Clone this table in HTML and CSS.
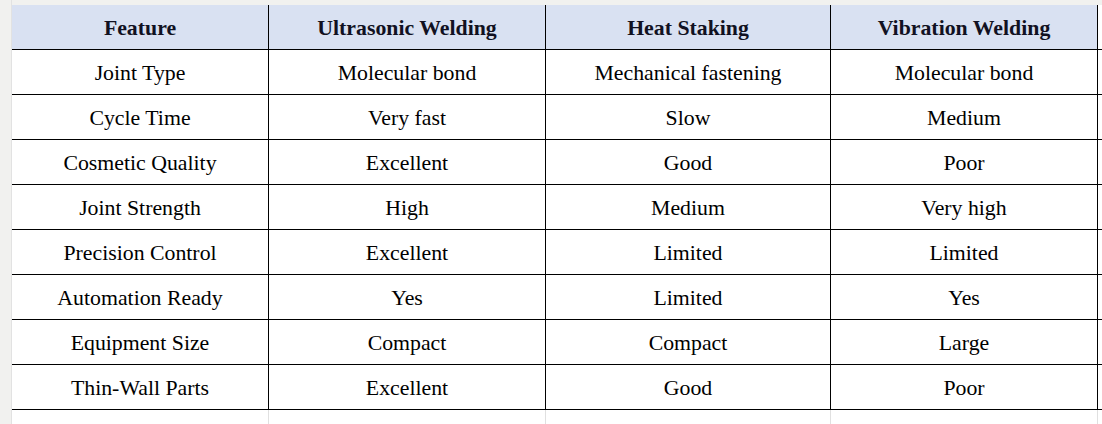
FILE: index.html
```html
<!DOCTYPE html>
<html>
<head>
<meta charset="utf-8">
<link rel="stylesheet" href="styles.css">
</head>
<body>
<div class="sheet">
  <div class="gutter"></div>
  <div class="area">
    <div class="topband"></div>
    <div class="table">
      <div class="row head">
        <div class="cell c1">Feature</div>
        <div class="cell c2">Ultrasonic Welding</div>
        <div class="cell c3">Heat Staking</div>
        <div class="cell c4">Vibration Welding</div>
      </div>
      <div class="row">
        <div class="cell c1">Joint Type</div>
        <div class="cell c2">Molecular bond</div>
        <div class="cell c3">Mechanical fastening</div>
        <div class="cell c4">Molecular bond</div>
      </div>
      <div class="row">
        <div class="cell c1">Cycle Time</div>
        <div class="cell c2">Very fast</div>
        <div class="cell c3">Slow</div>
        <div class="cell c4">Medium</div>
      </div>
      <div class="row">
        <div class="cell c1">Cosmetic Quality</div>
        <div class="cell c2">Excellent</div>
        <div class="cell c3">Good</div>
        <div class="cell c4">Poor</div>
      </div>
      <div class="row">
        <div class="cell c1">Joint Strength</div>
        <div class="cell c2">High</div>
        <div class="cell c3">Medium</div>
        <div class="cell c4">Very high</div>
      </div>
      <div class="row">
        <div class="cell c1">Precision Control</div>
        <div class="cell c2">Excellent</div>
        <div class="cell c3">Limited</div>
        <div class="cell c4">Limited</div>
      </div>
      <div class="row">
        <div class="cell c1">Automation Ready</div>
        <div class="cell c2">Yes</div>
        <div class="cell c3">Limited</div>
        <div class="cell c4">Yes</div>
      </div>
      <div class="row">
        <div class="cell c1">Equipment Size</div>
        <div class="cell c2">Compact</div>
        <div class="cell c3">Compact</div>
        <div class="cell c4">Large</div>
      </div>
      <div class="row">
        <div class="cell c1">Thin-Wall Parts</div>
        <div class="cell c2">Excellent</div>
        <div class="cell c3">Good</div>
        <div class="cell c4">Poor</div>
      </div>
      <div class="row empty">
        <div class="cell c1"></div>
        <div class="cell c2"></div>
        <div class="cell c3"></div>
        <div class="cell c4"></div>
      </div>
    </div>
  </div>
</div>
</body>
</html>
```
FILE: styles.css
```css
html, body {
  margin: 0;
  padding: 0;
  background: #ffffff;
  overflow: hidden;
}
.sheet {
  display: flex;
  width: 1102px;
  height: 424px;
  overflow: hidden;
  color: #000;
}
.gutter {
  width: 11px;
  flex: none;
  background: #f1f1ef;
  border-right: 1px solid #e2e2e2;
}
.area {
  flex: 1;
  display: flex;
  flex-direction: column;
  background: #f7f7f7;
}
.topband {
  height: 5px;
  flex: none;
  background: #f1f1ef;
}
.table {
  flex: none;
  display: flex;
  flex-direction: column;
  background: #fff;
}
.row {
  flex: none;
  display: flex;
  height: 45px;
  border-bottom: 1px solid #000;
  box-sizing: border-box;
}
.cell {
  flex: none;
  box-sizing: border-box;
  border-right: 1px solid #000;
  display: flex;
  align-items: center;
  justify-content: center;
  padding-top: 2px;
  font-family: "Liberation Serif", "Tinos", "Times New Roman", Times, "DejaVu Serif", serif;
  font-size: 21.8px;
  white-space: nowrap;
  background: #fff;
}
.c1 { width: 257px; }
.c2 { width: 277px; }
.c3 { width: 285px; }
.c4 { width: 267px; }
.head .cell {
  background: #d9e1f2;
  font-weight: bold;
  color: #111122;
}
.row.empty {
  border-bottom: none;
}
.row.empty .cell {
  border-right: 1px solid #e0e0e0;
}
```
